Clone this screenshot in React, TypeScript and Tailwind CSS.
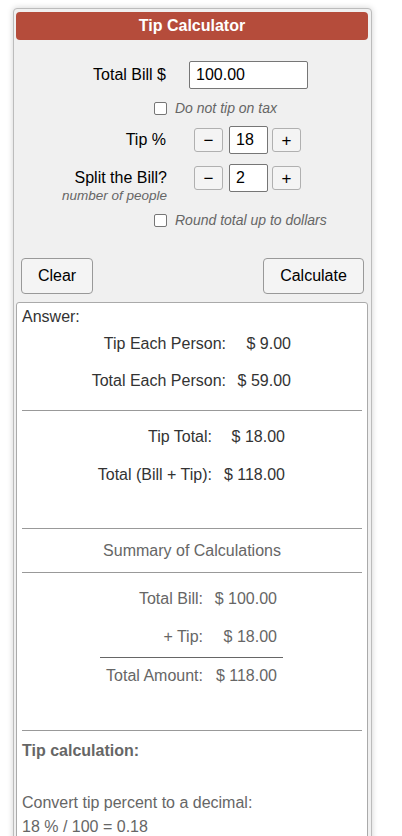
import React from 'react';

const font = { fontFamily: '"Liberation Sans", Arial, sans-serif' };

function Checkbox() {
    return <span className="inline-block w-[13px] h-[13px] border border-[#767676] rounded-[2px] bg-white shrink-0"></span>;
}

function StepButton({ children }: { children: React.ReactNode }) {
    return (
        <button className="w-[29px] h-[24px] flex items-center justify-center border border-[#b0b0b0] rounded-[3px] bg-[#f4f4f4] text-[17px] leading-none text-black">
            {children}
        </button>
    );
}

function Stepper({ value }: { value: string }) {
    return (
        <div className="flex items-center">
            <StepButton>−</StepButton>
            <div className="ml-[6px] w-[39px] h-[28px] border border-[#767676] rounded-[2px] bg-white pl-[6px] flex items-center text-[16px] text-black">
                {value}
            </div>
            <div className="ml-[4px]">
                <StepButton>+</StepButton>
            </div>
        </div>
    );
}

function Row({ label, value, lw, vw, className }: { label: string; value: string; lw: string; vw: string; className: string }) {
    return (
        <div className={`flex leading-[18px] ${className}`}>
            <div className={`${lw} text-right whitespace-nowrap`}>{label}</div>
            <div className={`${vw} text-right whitespace-nowrap`}>{value}</div>
        </div>
    );
}

export default function App() {
    return (
        <div className="h-[836px] bg-white overflow-hidden" style={font}>
            <div className="mt-[8px] ml-[13px] w-[359px] border border-[#bcbcbc] rounded-[4px] bg-[#f0f0f0] pl-[2px] pr-[3px] pt-[3px] shadow-[0_0_6px_rgba(0,0,0,0.18)]">
                {/* Header */}
                <div className="h-[28px] rounded-[4px] bg-[#b54c3b] flex items-center justify-center text-white font-bold text-[16px]">
                    Tip Calculator
                </div>

                {/* Form */}
                <div className="-ml-[2px]">
                    <div className="mt-[21px] flex items-center h-[28px]">
                        <div className="w-[152px] text-right text-[16px] text-black">Total Bill $</div>
                        <div className="ml-[23px] w-[119px] h-[28px] border border-[#767676] rounded-[2px] bg-white pl-[6px] flex items-center text-[16px] text-black">
                            100.00
                        </div>
                    </div>

                    <div className="mt-[12px] flex items-center h-[14px] ml-[140px]">
                        <Checkbox />
                        <span className="ml-[8px] italic text-[14px] text-[#666]">Do not tip on tax</span>
                    </div>

                    <div className="mt-[11px] flex items-center h-[28px]">
                        <div className="w-[152px] text-right text-[16px] text-black">Tip %</div>
                        <div className="ml-[28px]">
                            <Stepper value="18" />
                        </div>
                    </div>

                    <div className="mt-[10px] flex items-start">
                        <div className="w-[153px] text-right">
                            <div className="text-[16px] leading-[18px] text-black mt-[5px]">Split the Bill?</div>
                            <div className="text-[13.5px] leading-[16px] italic text-[#666] mt-[1px] whitespace-nowrap">number of people</div>
                        </div>
                        <div className="ml-[27px]">
                            <Stepper value="2" />
                        </div>
                    </div>

                    <div className="mt-[9px] flex items-center h-[14px] ml-[140px]">
                        <Checkbox />
                        <span className="ml-[8px] italic text-[14px] text-[#666]">Round total up to dollars</span>
                    </div>
                </div>

                {/* Buttons */}
                <div className="mt-[31px] flex justify-between pl-[5px] pr-[4px]">
                    <button className="w-[72px] h-[36px] border border-[#999] rounded-[4px] bg-[#f4f4f4] text-[16px] text-black">Clear</button>
                    <button className="w-[101px] h-[36px] border border-[#999] rounded-[4px] bg-[#f4f4f4] text-[16px] text-black">Calculate</button>
                </div>

                {/* Result */}
                <div className="mt-[8px] border border-[#aaa] rounded-[3px] bg-white pb-[20px] text-[16px]">
                    <div className="mt-[5px] ml-[5px] leading-[18px] text-[#333]">Answer:</div>

                    <div className="text-[#333]">
                        <Row className="mt-[9px]" lw="w-[209px]" vw="w-[65px]" label="Tip Each Person:" value="$ 9.00" />
                        <Row className="mt-[19px]" lw="w-[209px]" vw="w-[65px]" label="Total Each Person:" value="$ 59.00" />
                    </div>

                    <div className="mt-[20px] mx-[5px] border-t border-[#999]"></div>

                    <div className="text-[#333]">
                        <Row className="mt-[17px]" lw="w-[195px]" vw="w-[73px]" label="Tip Total:" value="$ 18.00" />
                        <Row className="mt-[20px]" lw="w-[195px]" vw="w-[73px]" label="Total (Bill + Tip):" value="$ 118.00" />
                    </div>

                    <div className="mt-[44px] mx-[5px] border-t border-[#999]"></div>
                    <div className="mt-[13px] text-center leading-[18px] text-[#666]">Summary of Calculations</div>
                    <div className="mt-[12px] mx-[5px] border-t border-[#999]"></div>

                    <div className="text-[#666]">
                        <Row className="mt-[17px]" lw="w-[186px]" vw="w-[74px]" label="Total Bill:" value="$ 100.00" />
                        <Row className="mt-[20px]" lw="w-[186px]" vw="w-[74px]" label="+ Tip:" value="$ 18.00" />
                        <div className="mt-[11px] ml-[83px] w-[183px] border-t border-[#666]"></div>
                        <Row className="mt-[9px]" lw="w-[186px]" vw="w-[74px]" label="Total Amount:" value="$ 118.00" />
                    </div>

                    <div className="mt-[45px] mx-[5px] border-t border-[#999]"></div>

                    <div className="px-[5px] text-[#666] leading-[18px]">
                        <div className="mt-[11px] font-bold">Tip calculation:</div>
                        <div className="mt-[34px]">Convert tip percent to a decimal:</div>
                        <div className="mt-[6px]">18 % / 100 = 0.18</div>
                    </div>
                </div>
            </div>
        </div>
    );
}
